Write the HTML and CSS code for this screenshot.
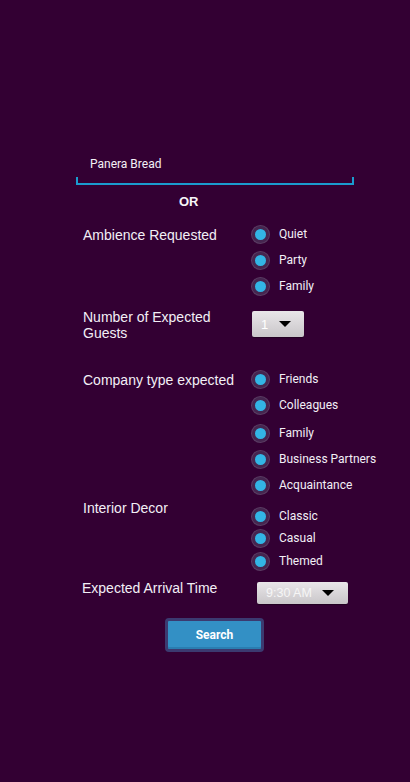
FILE: index.html
```html
<!DOCTYPE html>
<html>
<head>
<meta charset="utf-8">
<link rel="stylesheet" href="styles.css">
</head>
<body>
<main class="form">
  <div class="field">
    <div class="field-text">Panera Bread</div>
    <div class="underline"></div>
  </div>
  <div class="or">OR</div>

  <div class="row row-ambience">
    <div class="label">Ambience Requested</div>
    <div class="options">
      <div class="opt"><span class="radio"></span><span>Quiet</span></div>
      <div class="opt"><span class="radio"></span><span>Party</span></div>
      <div class="opt"><span class="radio"></span><span>Family</span></div>
    </div>
  </div>

  <div class="row row-guests">
    <div class="label">Number of Expected<br>Guests</div>
    <div class="select select-guests"><span class="sel-text">1</span><span class="arrow"></span></div>
  </div>

  <div class="row row-company">
    <div class="label">Company type expected</div>
    <div class="options">
      <div class="opt"><span class="radio"></span><span>Friends</span></div>
      <div class="opt"><span class="radio"></span><span>Colleagues</span></div>
      <div class="opt opt-gap"><span class="radio"></span><span>Family</span></div>
      <div class="opt"><span class="radio"></span><span>Business Partners</span></div>
      <div class="opt"><span class="radio"></span><span>Acquaintance</span></div>
    </div>
  </div>

  <div class="row row-decor">
    <div class="label label-decor">Interior Decor</div>
    <div class="options options-decor">
      <div class="opt opt-small"><span class="radio"></span><span>Classic</span></div>
      <div class="opt opt-small"><span class="radio"></span><span>Casual</span></div>
      <div class="opt opt-small opt-gap1"><span class="radio"></span><span>Themed</span></div>
    </div>
  </div>

  <div class="row row-arrival">
    <div class="label label-arrival">Expected Arrival Time</div>
    <div class="select select-time"><span class="sel-text">9:30 AM</span><span class="arrow"></span></div>
  </div>

  <div class="actions">
    <button class="search-btn" type="button">Search</button>
  </div>
</main>
</body>
</html>
```
FILE: styles.css
```css
html, body {
  margin: 0;
  padding: 0;
  background: #330033;
  height: 100%;
}
body {
  font-family: "Liberation Sans", Arial, sans-serif;
  color: #f2eff6;
}
.form {
  padding-top: 157px;
  display: flex;
  flex-direction: column;
}
.field {
  margin-left: 76px;
  width: 278px;
}
.field-text {
  font-family: Roboto, "Liberation Sans", sans-serif;
  font-size: 12px;
  line-height: 14px;
  padding-left: 14px;
  color: #f4f0f6;
}
.underline {
  margin-top: 6px;
  height: 6px;
  border: 2px solid #1b9bcf;
  border-top: none;
}
.or {
  margin-top: 9px;
  padding-left: 179px;
  font-weight: bold;
  font-size: 13px;
  line-height: 16px;
  color: #f6f4f8;
}
.row {
  display: flex;
  align-items: flex-start;
  padding-left: 83px;
}
.label {
  width: 169px;
  flex: none;
  font-size: 14px;
  line-height: 16px;
  padding-top: 6px;
}
.row-ambience { margin-top: 11px; }
.row-guests { margin-top: 10px; }
.row-guests .label { padding-top: 0; }
.row-company { margin-top: 25px; }
.row-decor { margin-top: 2px; }
.label-decor { padding-top: 0; }
.options-decor { padding-top: 5px; }
.row-arrival { margin-top: 8px; padding-left: 82px; }
.label-arrival { padding-top: 0; width: 175px; }

.options {
  display: flex;
  flex-direction: column;
}
.opt {
  display: flex;
  align-items: center;
  height: 26px;
  font-family: Roboto, "Liberation Sans", sans-serif;
  font-size: 12px;
  color: #f2eff6;
}
.opt-small { height: 22px; }
.opt-gap { margin-top: 2px; }
.opt-gap1 { margin-top: 1px; }
.radio {
  width: 17px;
  height: 17px;
  box-sizing: border-box;
  border-radius: 50%;
  background: #33b5e5;
  border: 3px solid #45254f;
  box-shadow: 0 0 0 1px #5a3c63;
  margin-right: 10px;
  flex: none;
}
.select {
  display: flex;
  align-items: center;
  box-sizing: border-box;
  background: linear-gradient(#e9e6e9, #c9c6c9);
  border-radius: 2px;
  color: #ffffff;
  font-size: 12px;
  padding-left: 9px;
  box-shadow: 0 1px 1px rgba(0,0,0,0.35);
}
.select-guests {
  width: 52px;
  height: 26px;
  margin-top: 2px;
}
.select-guests .sel-text { width: 18px; font-size: 13px; }
.select-time {
  width: 91px;
  height: 22px;
  margin-top: 2px;
}
.select-time .sel-text { width: 56px; color: #f6f6f6; font-size: 12.5px; }
.arrow {
  width: 0;
  height: 0;
  border-left: 6px solid transparent;
  border-right: 6px solid transparent;
  border-top: 6px solid #000;
}
.actions {
  margin-top: 14px;
  padding-left: 165px;
}
.search-btn {
  width: 99px;
  height: 34px;
  box-sizing: border-box;
  border: 3px solid #3b3a70;
  border-radius: 4px;
  background: #3390c5;
  box-shadow: inset 0 -2px 0 #2a7db0;
  color: #ffffff;
  font-family: Roboto, "Liberation Sans", sans-serif;
  font-weight: bold;
  font-size: 12px;
  padding: 0;
  cursor: pointer;
}
```
